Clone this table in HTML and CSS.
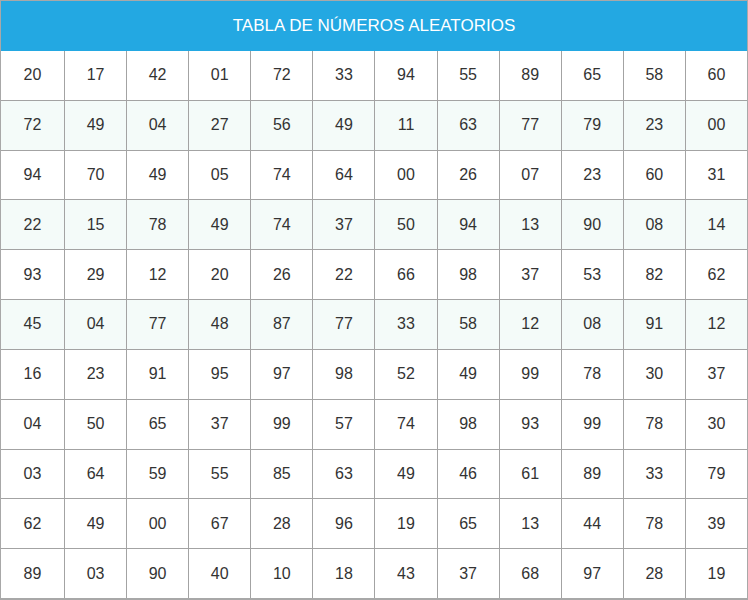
FILE: index.html
```html
<!DOCTYPE html>
<html lang="es">
<head>
<meta charset="utf-8">
<title>Tabla de números aleatorios</title>
<link rel="stylesheet" href="styles.css">
</head>
<body>
<div class="table">
  <div class="head">TABLA DE NÚMEROS ALEATORIOS</div>
  <div class="cell">20</div><div class="cell">17</div><div class="cell">42</div><div class="cell">01</div><div class="cell">72</div><div class="cell">33</div><div class="cell">94</div><div class="cell">55</div><div class="cell">89</div><div class="cell">65</div><div class="cell">58</div><div class="cell">60</div>
  <div class="cell alt">72</div><div class="cell alt">49</div><div class="cell alt">04</div><div class="cell alt">27</div><div class="cell alt">56</div><div class="cell alt">49</div><div class="cell alt">11</div><div class="cell alt">63</div><div class="cell alt">77</div><div class="cell alt">79</div><div class="cell alt">23</div><div class="cell alt">00</div>
  <div class="cell">94</div><div class="cell">70</div><div class="cell">49</div><div class="cell">05</div><div class="cell">74</div><div class="cell">64</div><div class="cell">00</div><div class="cell">26</div><div class="cell">07</div><div class="cell">23</div><div class="cell">60</div><div class="cell">31</div>
  <div class="cell alt">22</div><div class="cell alt">15</div><div class="cell alt">78</div><div class="cell alt">49</div><div class="cell alt">74</div><div class="cell alt">37</div><div class="cell alt">50</div><div class="cell alt">94</div><div class="cell alt">13</div><div class="cell alt">90</div><div class="cell alt">08</div><div class="cell alt">14</div>
  <div class="cell">93</div><div class="cell">29</div><div class="cell">12</div><div class="cell">20</div><div class="cell">26</div><div class="cell">22</div><div class="cell">66</div><div class="cell">98</div><div class="cell">37</div><div class="cell">53</div><div class="cell">82</div><div class="cell">62</div>
  <div class="cell alt">45</div><div class="cell alt">04</div><div class="cell alt">77</div><div class="cell alt">48</div><div class="cell alt">87</div><div class="cell alt">77</div><div class="cell alt">33</div><div class="cell alt">58</div><div class="cell alt">12</div><div class="cell alt">08</div><div class="cell alt">91</div><div class="cell alt">12</div>
  <div class="cell">16</div><div class="cell">23</div><div class="cell">91</div><div class="cell">95</div><div class="cell">97</div><div class="cell">98</div><div class="cell">52</div><div class="cell">49</div><div class="cell">99</div><div class="cell">78</div><div class="cell">30</div><div class="cell">37</div>
  <div class="cell">04</div><div class="cell">50</div><div class="cell">65</div><div class="cell">37</div><div class="cell">99</div><div class="cell">57</div><div class="cell">74</div><div class="cell">98</div><div class="cell">93</div><div class="cell">99</div><div class="cell">78</div><div class="cell">30</div>
  <div class="cell">03</div><div class="cell">64</div><div class="cell">59</div><div class="cell">55</div><div class="cell">85</div><div class="cell">63</div><div class="cell">49</div><div class="cell">46</div><div class="cell">61</div><div class="cell">89</div><div class="cell">33</div><div class="cell">79</div>
  <div class="cell">62</div><div class="cell">49</div><div class="cell">00</div><div class="cell">67</div><div class="cell">28</div><div class="cell">96</div><div class="cell">19</div><div class="cell">65</div><div class="cell">13</div><div class="cell">44</div><div class="cell">78</div><div class="cell">39</div>
  <div class="cell">89</div><div class="cell">03</div><div class="cell">90</div><div class="cell">40</div><div class="cell">10</div><div class="cell">18</div><div class="cell">43</div><div class="cell">37</div><div class="cell">68</div><div class="cell">97</div><div class="cell">28</div><div class="cell">19</div>
</div>
</body>
</html>
```
FILE: styles.css
```css
html, body {
  margin: 0;
  padding: 0;
  background: #ffffff;
}
.table {
  box-sizing: border-box;
  width: 748px;
  height: 600px;
  border: 1px solid #a8a8a8;
  border-bottom-width: 2px;
  background: #a3a3a3;
  display: grid;
  grid-template-columns: 63px repeat(11, 1fr);
  grid-template-rows: 49px repeat(11, 1fr);
  gap: 1px;
  font-family: "Liberation Sans", Arial, Helvetica, sans-serif;
}
.head {
  grid-column: 1 / -1;
  background: #23a8e2;
  color: #ffffff;
  font-size: 17px;
  display: flex;
  align-items: center;
  justify-content: center;
  margin-bottom: -1px;
  padding-bottom: 1px;
}
.cell {
  background: #ffffff;
  color: #333333;
  font-size: 16px;
  display: flex;
  align-items: center;
  justify-content: center;
}
.cell.alt {
  background: #f4fbf9;
}
```
